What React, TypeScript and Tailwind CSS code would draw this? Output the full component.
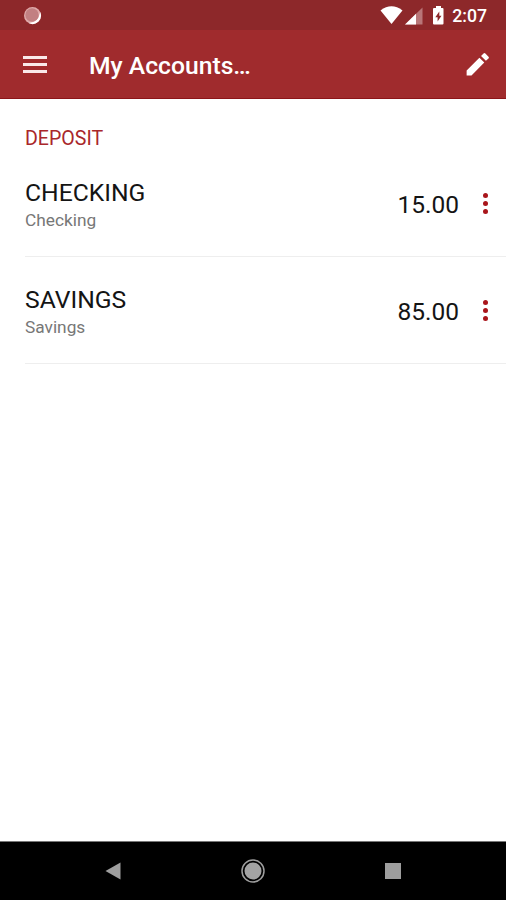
type Account = { name: string; kind: string; balance: string };

const accounts: Account[] = [
  { name: 'CHECKING', kind: 'Checking', balance: '15.00' },
  { name: 'SAVINGS', kind: 'Savings', balance: '85.00' },
];

function StatusBar() {
  return (
    <div className="flex h-[30px] shrink-0 items-center bg-[#8d282a] pl-[23px] pr-[19px]">
      <svg width="19" height="19" viewBox="0 0 19 19">
        <circle cx="9.5" cy="9.5" r="8.5" fill="#dfa9a9" />
        <path d="M17.2 6A8.5 8.5 0 0 1 5.5 17Q15.500 16.500 17.200 6z" fill="#fff" />
        <circle cx="9" cy="9" r="6.700" fill="#c28082" />
      </svg>
      <svg className="ml-auto" width="66" height="22" viewBox="0 0 66 22">
        <path d="M0.500 6.500Q11.500-1.800 22.500 6.500L11.500 20z" fill="#fff" />
        <path d="M42.500 3.500V20.500H25z" fill="#b87678" />
        <path d="M36 9.800V20.500H25z" fill="#fff" />
        <path d="M56 2h5v2h1.500q1 0 1 1V19.500q0 1-1 1H54q-1 0-1-1V5q0-1 1-1h2z" fill="#fff" />
        <path d="M59.300 7.500L55.300 13.200h2.300v4.300L61.500 11.800h-2.200z" fill="#8d282a" />
      </svg>
      <span className="ml-[6px] pt-[3px] text-[17.700px] font-medium leading-none text-white">2:07</span>
    </div>
  );
}

function AppBar() {
  return (
    <header className="flex h-[69px] shrink-0 items-center border-b border-[#8c1519] bg-[#a02b2d] pl-[23px] pr-[15px]">
      <div className="flex w-6 flex-col gap-1">
        <div className="h-[3px] bg-[#f9e9e9]" />
        <div className="h-[3px] bg-[#f9e9e9]" />
        <div className="h-[3px] bg-[#f9e9e9]" />
      </div>
      <h1 className="ml-[42px] pt-1 text-[24.700px] font-medium leading-7 text-white">My Accounts…</h1>
      <svg className="ml-auto" width="26" height="26" viewBox="0 0 24 24" fill="#fff">
        <path d="M1.500 18V22.500H6L17.800 10.700 13.300 6.200zM21.700 6.900a1.200 1.200 0 0 0 0-1.700L18.800 2.300a1.200 1.200 0 0 0-1.700 0L14.800 4.600l4.500 4.500z" />
      </svg>
    </header>
  );
}

function AccountRow({ name, kind, balance }: Account) {
  return (
    <li className="ml-[25px] flex h-[107px] items-center border-b border-[#eeeeee] pr-[18px]">
      <div className="flex flex-col pt-[7px]">
        <span className="text-[24.700px] leading-7 text-[#141414]">{name}</span>
        <span className="text-[17.300px] leading-[27px] text-[#777777]">{kind}</span>
      </div>
      <span className="ml-auto pt-[3px] text-[24.500px] leading-7 text-[#141414]">{balance}</span>
      <div className="ml-6 flex flex-col gap-[3px]">
        <i className="size-[5px] rounded-full bg-[#a9151b]" />
        <i className="size-[5px] rounded-full bg-[#a9151b]" />
        <i className="size-[5px] rounded-full bg-[#a9151b]" />
      </div>
    </li>
  );
}

function NavBar() {
  return (
    <nav className="flex h-[59px] shrink-0 items-center justify-between border-t border-[#777777] bg-black pl-[105px] pr-[105px]">
      <svg width="16" height="18" viewBox="0 0 16 18">
        <path d="M0.500 9L15.500 0.500V17.500z" fill="#9e9e9e" />
      </svg>
      <svg width="24" height="24" viewBox="0 0 24 24">
        <circle cx="12" cy="12" r="11" fill="none" stroke="#9e9e9e" strokeWidth="1.500" />
        <circle cx="12" cy="12" r="8.500" fill="#a3a3a3" />
      </svg>
      <div className="size-4 bg-[#9e9e9e]" />
    </nav>
  );
}

export default function App() {
  return (
    <div className="flex h-[900px] w-[506px] flex-col overflow-hidden bg-white font-['Roboto',sans-serif]">
      <StatusBar />
      <AppBar />
      <main className="flex-1">
        <h2 className="ml-[25px] pt-[29px] text-[19.600px] leading-[22px] text-[#a9272b]">DEPOSIT</h2>
        <ul>
          {accounts.map((a) => (
            <AccountRow key={a.name} {...a} />
          ))}
        </ul>
      </main>
      <NavBar />
    </div>
  );
}
